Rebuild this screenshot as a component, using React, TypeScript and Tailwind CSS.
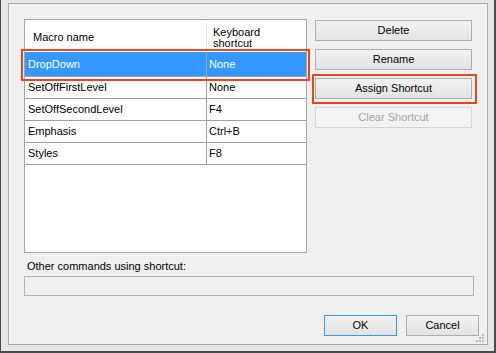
const MACROS = [
  { name: "DropDown", key: "None" },
  { name: "SetOffFirstLevel", key: "None" },
  { name: "SetOffSecondLevel", key: "F4" },
  { name: "Emphasis", key: "Ctrl+B" },
  { name: "Styles", key: "F8" },
];

function Button({
  label,
  disabled = false,
  primary = false,
  className = "",
}: {
  label: string;
  disabled?: boolean;
  primary?: boolean;
  className?: string;
}) {
  return (
    <div
      className={`flex items-center justify-center border ${
        disabled
          ? "border-[#d5d5d5] bg-[#f4f4f4] text-[#a3a3a3]"
          : primary
            ? "border-[#3399ff] bg-gradient-to-b from-[#f2f2f2] to-[#e3e3e3] text-black"
            : "border-[#adadad] bg-gradient-to-b from-[#f2f2f2] to-[#e3e3e3] text-black"
      } ${className}`}
    >
      {label}
    </div>
  );
}

export default function App() {
  return (
    <div className="h-[353px] w-[496px] border-b-2 border-l border-r-2 border-[#4a4a4a] bg-[#e6e6e6] pb-[6px] pl-[7px] pr-[6px] pt-[3px] font-['Liberation_Sans',Arial,sans-serif] text-[11px] text-black">
      <div className="relative flex h-full w-full flex-col border border-[#aaaaaa] bg-[#f0f0f0] pl-[15px] pt-[15px]">
        <div className="flex items-start">
          {/* macro list */}
          <div className="relative h-[234px] w-[283px] border border-[#a5a5a5] bg-white">
            <div className="flex h-[32px] pt-[3px]">
              <div className="flex w-[182px] items-center border-r border-[#e5e5e5] pl-[8px]">
                Macro name
              </div>
              <div className="flex flex-col justify-center pl-[6px] leading-[11px]">
                <span>Keyboard</span>
                <span>shortcut</span>
              </div>
            </div>
            {MACROS.map((m, i) => (
              <div
                key={m.name}
                className={`flex border-b border-[#a0a0a0] ${
                  i === 0 ? "h-[25px] bg-[#3399ff] text-white" : "h-[22px]"
                }`}
              >
                <div className="flex w-[182px] items-center border-r border-[#a0a0a0] pl-[3px]">
                  {m.name}
                </div>
                <div className="flex items-center pl-[2px]">{m.key}</div>
              </div>
            ))}
            <div className="pointer-events-none absolute left-[-4px] top-[29px] h-[32px] w-[289px] border-2 border-[#e8461e]" />
          </div>

          {/* action buttons */}
          <div className="ml-[8px] mt-[1px] flex w-[157px] flex-col gap-[8px]">
            <Button label="Delete" className="h-[21px]" />
            <Button label="Rename" className="h-[21px]" />
            <div className="relative">
              <Button label="Assign Shortcut" className="h-[21px]" />
              <div className="pointer-events-none absolute bottom-[-5px] left-[-3px] right-[-5px] top-[-4px] border-2 border-[#e8461e]" />
            </div>
            <Button label="Clear Shortcut" disabled className="h-[21px]" />
          </div>
        </div>

        <div className="mt-[7px] h-[13px] pl-[3px] leading-[13px]">Other commands using shortcut:</div>
        <div className="mt-[3px] h-[20px] w-[450px] border border-[#b4b4b4] bg-[#f0f0f0]" />

        <div className="mr-[8px] mt-[19px] flex justify-end gap-[9px]">
          <Button label="OK" primary className="h-[21px] w-[73px]" />
          <Button label="Cancel" className="h-[21px] w-[73px]" />
        </div>

        {/* resize grip */}
        <svg className="absolute left-[467px] top-[330px]" width="8" height="8" viewBox="0 0 8 8">
          {[
            [6, 0],
            [3, 3],
            [6, 3],
            [0, 6],
            [3, 6],
            [6, 6],
          ].map(([x, y]) => (
            <rect key={`${x}-${y}`} x={x} y={y} width="2" height="2" fill="#b8b8b8" />
          ))}
        </svg>
      </div>
    </div>
  );
}
